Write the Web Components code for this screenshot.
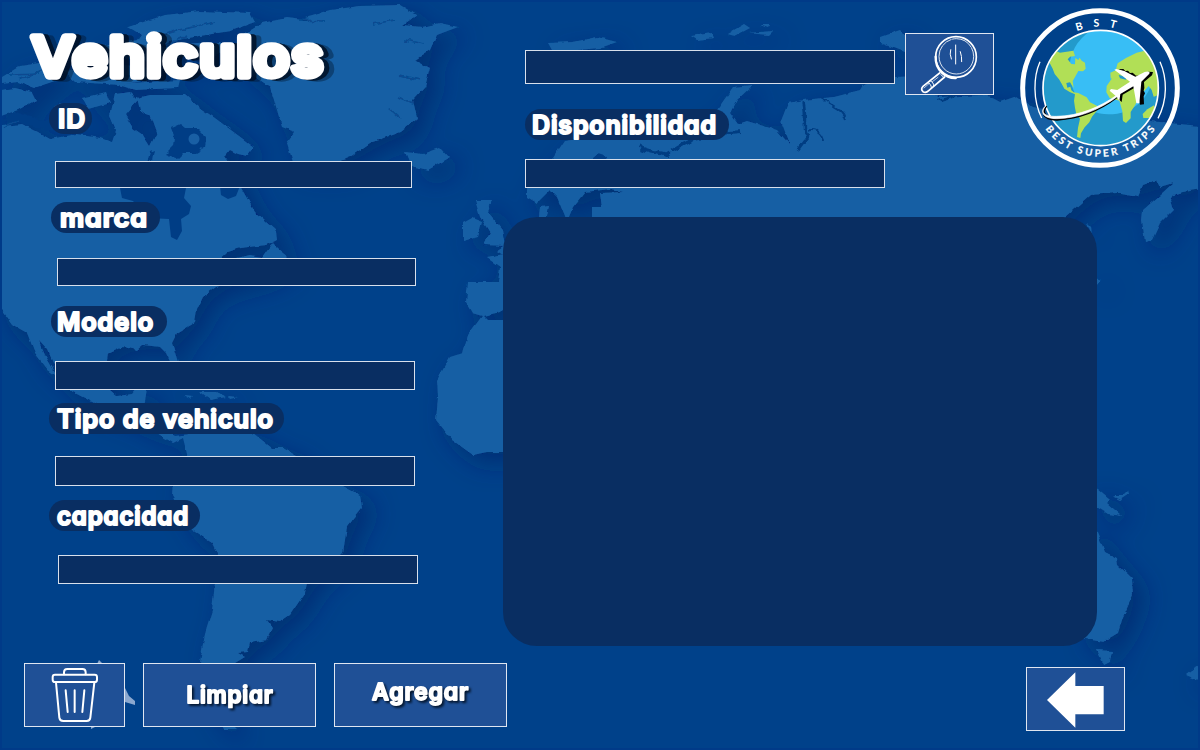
<!DOCTYPE html>
<html lang="es">
<head>
<meta charset="utf-8">
<title>Vehiculos</title>
<style>
html,body{margin:0;height:100%;overflow:hidden;background:#00408a}
</style>
</head>
<body>
<vehicle-screen></vehicle-screen>
<script>
const define = (name, render) => customElements.define(name, class extends HTMLElement {
  connectedCallback() {
    if (this.shadowRoot) return;
    this.attachShadow({ mode: 'open' }).innerHTML = render(k => this.getAttribute(k));
  }
});

/* Rounded heavy lettering: Inter with the single-storey a and round stroke joins */
const FONT = `text{font-family:Inter,"Liberation Sans",sans-serif;font-weight:600;font-feature-settings:"cv11";letter-spacing:.035em;fill:#fff;stroke:#fff;stroke-linejoin:round;stroke-linecap:round}`;

define('world-map', () => `
<style>:host{display:block;position:absolute;inset:0;z-index:-1}svg{display:block}</style>
<svg width="1200" height="750" viewBox="0 0 1200 750">
<defs>
<filter id="coast" x="0" y="0" width="1200" height="750" filterUnits="userSpaceOnUse">
<feTurbulence type="fractalNoise" baseFrequency=".13" numOctaves="2" seed="4" result="n"/>
<feDisplacementMap in="SourceGraphic" in2="n" scale="4" xChannelSelector="R" yChannelSelector="G" result="d"/>
<feDropShadow in="d" dx="11" dy="10" stdDeviation="12" flood-color="#002060" flood-opacity=".5"/>
</filter>
<filter id="rough" x="0" y="0" width="1200" height="750" filterUnits="userSpaceOnUse">
<feTurbulence type="fractalNoise" baseFrequency=".12" numOctaves="2" seed="9" result="n"/>
<feDisplacementMap in="SourceGraphic" in2="n" scale="7" xChannelSelector="R" yChannelSelector="G"/>
</filter>
<clipPath id="c"><rect x="2" y="2" width="1196" height="746"/></clipPath>
</defs>
<rect width="1200" height="750" fill="#003a88"/><rect x="2" y="2" width="1196" height="746" fill="#00418a"/>
<g clip-path="url(#c)"><g fill="#195fa4" filter="url(#coast)">
<path d="M-8 127L22 124 38 132 50 139 76 134 100 138 112 142 116 130 110 116 115 94 130 92 138 100 125 115 133 128 143 135 150 146 157 132 152 118 140 110 137 98 150 95 185 95 200 108 215 118 235 133 254 147 247 156 238 154 230 150 225 156 232 166 240 186 255 212 276 231 277 240 267 245 240 248 227 252 216 262 228 260 250 255 262 257 272 243 278 249 288 257 270 272 216 287 203 297 197 310 195 322 177 333 172 343 178 362 174 370 166 353 160 347 143 345 137 350 123 347 108 354 105 375 110 390 117 396 132 394 136 389 147 388 144 408 165 430 175 436 190 434 206 430 253 433 272 448 283 448 297 456 320 480 343 486 360 495 362 508 347 527 343 553 322 572 307 583 305 593 290 615 280 622 267 620 273 628 267 640 250 643 248 652 238 653 245 657 235 663 226 690 222 715 236 729 224 729 205 700 200 662 205 633 212 610 215 583 217 553 212 543 192 530 172 495 173 480 188 458 183 438 173 443 160 435 130 416 97 404 70 390 60 376 48 350 38 339 45 355 58 377 48 370 35 353 27 333 13 325 2 310 -8 300Z"/>
<path d="M240 37L262 23 287 18 312 21 305 17 330 10 360 6 400 5 417 15 403 25 422 27 440 23 458 27 437 35 430 50 415 60 430 68 425 87 413 100 417 118 400 132 370 143 350 157 333 164 293 162 287 143 295 132 282 127 277 110 270 87 248 72 235 55Z"/>
<path d="M128 27L165 15 200 11 250 13 255 22 230 31 200 36 172 41 150 50 135 45 142 35Z"/>
<path d="M90 50L115 43 145 38 155 48 185 45 220 42 228 50 205 60 180 56 150 62 120 57 98 61Z"/>
<path d="M2 77L20 66 47 62 58 70 55 81 34 88 18 82 2 84Z"/><path d="M62 70L98 72 125 65 150 68 160 78 120 85 75 82Z"/>
<path d="M115 84L180 80 178 88 135 90Z"/><path d="M-5 91L15 88 32 92 36 100 18 110 -5 118Z"/>
<path d="M82 98L106 92 110 103 88 109Z"/><path d="M60 102L70 105 64 110 54 107Z"/>
<path d="M405 152L423 154 440 148 449 158 428 170 411 166Z"/>
<path d="M475 200L492 200 488 212 503 230 506 246 483 245 490 233 480 217Z"/><path d="M463 223L472 218 482 222 478 237 463 241Z"/>
<path d="M540 207L549 206 547 217 539 217Z"/>
<path d="M510 242L497 251 503 255 487 258 500 267 498 282 468 282 466 303 472 313 482 316 468 335 463 353 450 357 437 380 438 397 436 420 452 440 473 455 487 452 520 452 520 320 488 320 484 316 500 312 520 290Z"/>
<path d="M527 197L527 180 553 158 565 140 620 132 690 130 717 110 733 87 753 85 737 100 730 113 738 124 747 121 777 130 790 145 781 121 788 103 803 100 833 97 860 90 863 85 895 77 920 76 937 97 987 95 1000 102 1017 96 1033 107 1060 112 1120 118 1170 123 1208 127 1208 188 1183 192 1173 195 1170 200 1173 210 1160 223 1152 240 1145 242 1142 220 1143 210 1160 195 1173 183 1160 187 1157 180 1143 185 1138 197 1117 193 1090 195 1065 217 1040 250 592 250 592 207 602 207 600 193 623 192 611 189 585 192 573 207 567 222 557 197 550 190 537 203Z"/>
<path d="M880 37L900 30 907 37 905 52 880 43Z"/><path d="M548 43L573 42 597 37 617 42 600 48 577 50 552 50Z"/>
<path d="M691 36L712 33 714 38 697 40ZM727 34L744 24 750 28 735 36ZM748 33L772 31 768 35ZM760 25L770 25 768 28Z"/>
<path d="M1085 528L1097 532 1105 552 1117 558 1118 565 1132 578 1133 595 1123 617 1118 633 1103 642 1080 638Z"/>
<path d="M1097 650L1112 651 1110 662 1104 665Z"/><path d="M1090 486L1097 489 1110 500 1107 503 1122 516 1108 514 1090 503Z"/><path d="M1112 496L1122 496 1128 490 1129 494 1120 500Z"/>
<path d="M1186 675L1200 664 1200 681Z"/><path d="M183 395L193 396 190 399ZM199 392L216 392 226 397 210 400ZM228 396L238 397 230 399Z"/>
<path d="M1087 222L1091 226 1092 236ZM1095 277L1101 280 1096 286Z"/>
</g>
<path fill="#003d85" d="M120 188L186 188 184 198 191 206 189 214 181 219 182 231 177 240 171 237 169 219 148 218 133 201 122 198Z"/><path fill="#003d85" d="M220 186L240 186 236 196 228 199 221 195Z"/>
<g fill="#003d85" filter="url(#rough)"><path d="M171 128L180 124 186 129 198 129 206 137 205 147 195 153 184 153 178 159 166 154 174 146 175 138Z"/><path d="M2 119L20 112 36 119 60 121 66 127 46 131 20 123Z"/><path d="M150 151L155 149 153 160 147 162Z"/><path d="M593 157L598 153 607 156 606 160 594 160Z"/></g>
<circle cx="194" cy="139" r="5.5" fill="#195fa4"/>
<g fill="none" stroke="#003d82" filter="url(#rough)"><path stroke-width="4" d="M638 146C650 155 668 151 668 157M670 152C686 141 694 136 740 132"/><path stroke-width="3.5" d="M803 102C807 120 801 130 808 136L798 150"/><path stroke-width="2" d="M808 131C815 128 822 132 823 141M823 98C829 108 844 109 846 121M938 101L955 96"/></g>
<g fill="none" stroke="#084a90" stroke-width="1.5" filter="url(#rough)"><path d="M145 40L180 30 215 22M165 46L185 36M100 54L130 51 160 54M300 20L325 21M372 24L395 20M10 75L40 74M80 76L140 76M405 40L425 44M400 75L422 80M398 98L412 104M388 108L400 118M18 120L2 127M20 80L45 70"/></g>
<g fill="#8ba8cf"><path d="M125 688L129 696 135 701 135 705 125 702ZM97 664L99 660 103 664ZM91 727L95 727 91 729ZM113 727L115 728Z"/></g></g>
</svg>`);

define('screen-title', a => `
<style>:host{display:block;height:103px}svg{display:block;overflow:visible;filter:drop-shadow(5px 1px 0 rgba(0,14,32,.74)) drop-shadow(5px 1px 0 rgba(0,20,40,.52))}${FONT}text{font-weight:500}</style>
<svg width="503" height="103"><text x="32" y="76" font-size="54" stroke-width="7.4" textLength="293" lengthAdjust="spacingAndGlyphs">${a('text')}</text></svg>`);

define('field-pill', a => `
<style>:host{display:block;width:${a('w')}px;height:31px;border-radius:16px;background:#092e62}svg{display:block;overflow:visible}${FONT}</style>
<svg width="${a('w')}" height="31"><text x="${a('tx')}" y="24.5" font-size="25.5" stroke-width="2.1" textLength="${a('tl')}" lengthAdjust="spacingAndGlyphs">${a('text')}</text></svg>`);

define('text-field', () => `
<style>:host{display:block}input{display:block;box-sizing:border-box;width:100%;height:100%;margin:0;padding:0 8px;border:1px solid #d8e0ec;border-radius:0;background:#092e62;color:#fff;font:16px Inter,sans-serif;outline:0}</style><input type="text">`);

define('action-button', a => `
<style>:host{display:block}button{display:block;box-sizing:border-box;width:100%;height:100%;padding:0;border:1px solid #dfe6f1;background:#1f5096}svg{display:block;margin:-1px;overflow:visible}text{filter:drop-shadow(2px 2px 1px rgba(0,14,32,.85))}${FONT}</style>
<button>${a('text') ? `<svg width="173" height="64"><text x="${a('tx')}" y="${a('ty')}" font-size="22.5" stroke-width="1.8" textLength="${a('tl')}" lengthAdjust="spacingAndGlyphs">${a('text')}</text></svg>` : '<slot></slot>'}</button>`);

define('app-icon', a => {
  const icons = {
    trash: ['72 99 303 192', 101, 64, `<g fill="none" stroke="#fff" stroke-width="6" stroke-linecap="round" stroke-linejoin="round"><rect x="158" y="134" width="133" height="22" rx="7"/><path d="M192 133V127Q192 117 202 117H247Q257 117 257 127V133M168 158L178 263Q179 273 190 273H260Q270 273 271 263L283 158M197 181L203 246M224 181V246M253 181L247 246"/></g>`],
    search: ['315 99 267 186', 89, 62, `<g fill="none" stroke="#fff" stroke-linecap="round"><ellipse cx="468" cy="171" rx="61" ry="61" stroke-width="5"/><path d="M407 170C405 211 438 235 467 234" stroke-width="7"/><ellipse cx="469" cy="169" rx="52" ry="53" stroke-width="2.5" stroke-dasharray="230 4 65 3"/><path d="M467 135V192M452 149Q448 162 454 177M481 155Q486 169 485 185" stroke-width="3"/><path d="M419 219L369 259Q361 267 369 275Q378 280 386 272L434 231" stroke-width="5"/><path d="M423 224L429 230M383 248Q394 251 394 263M390 242Q402 246 401 259" stroke-width="3"/><path d="M372 264L388 250M396 246L414 232" stroke-width="2"/></g>`],
    back: ['49 651 297 192', 99, 64, `<path fill="#fff" d="M112 750L197 667V708H282V793H197V833Z"/>`]
  };
  const [vb, w, h, body] = icons[a('name')];
  return `<style>:host{display:block;margin:-1px}svg{display:block}</style><svg width="${w}" height="${h}" viewBox="${vb}">${body}</svg>`;
});

define('brand-logo', () => `
<style>:host{display:block;width:160px;height:160px}svg{display:block;overflow:visible}text{font-family:Lato,sans-serif;font-weight:700;fill:#fff}</style>
<svg width="160" height="160" viewBox="30 24 480 480">
<defs><clipPath id="g"><circle cx="272" cy="264" r="173"/></clipPath>
<path id="top" d="M87 264A184 184 0 0 1 455 264"/><path id="bottom" d="M65 264A206 206 0 0 0 477 264"/></defs>
<circle cx="270" cy="264" r="232" fill="none" stroke="#fff" stroke-width="15"/>
<g clip-path="url(#g)"><rect x="90" y="80" width="370" height="370" fill="#239acb"/><path fill="#38bef5" d="M262 80Q178 125 178 210C180 285 225 343 295 343C370 343 418 295 430 230L430 80Z"/>
<g fill="#b1df56"><path d="M110 172L140 154 150 158 190 152 195 168 180 170 173 178 184 192 195 193 196 174 205 180 209 173 215 182 225 188 227 206 219 214 205 213 193 235 188 243 191 264 180 247 169 249 172 263 181 260 184 271 191 277 205 279 230 292 240 307 262 318 260 333 246 350 238 367 224 382 213 400 211 414 201 411 204 383 210 356 199 343 195 324 192 302 195 283 179 276 163 266 155 251 147 238 134 222 128 206Z"/>
<path d="M302 236L301 218 317 211 323 190 348 174 380 158 414 150 450 176 460 250 440 287 431 290 425 270 416 258 402 274 382 269 379 287 385 292 376 314 362 336 362 355 348 369 339 363 337 334 328 302 299 294 289 277 290 258 306 235Z"/><path d="M398 342L412 328 432 316 437 350 415 354 400 354Z"/></g></g>
<path fill="#239acb" d="M326 225L350 230 348 239 330 235Z"/>
<circle cx="272" cy="264" r="173" fill="none" stroke="#fff" stroke-width="5"/>
<path d="M90 185C70 230 68 300 95 354M450 185C472 235 473 300 444 355" fill="none" stroke="#fff" stroke-width="4"/>
<path d="M108 317C93 336 103 354 140 352C210 350 270 325 324 287L320 291C270 329 205 356 140 359C91 360 91 330 108 317Z" stroke="#000" stroke-width="4" transform="translate(2 1)"/>
<path d="M108 317C91 335 99 350 140 349C207 348 270 322 324 283L324 288C270 329 204 355 140 356C91 356 91 328 108 317Z" fill="#fff" stroke="#fff" stroke-width="2"/>
<path fill="#000" d="M325 208L340 207 346 213 354 212 360 219 368 218 378 227 392 226 414 215 429 216 426 226 402 246 403 264 401 272 405 280 401 289 402 313 390 314 379 260 338 284 335 306 324 296 330 275 362 248 372 235 345 216Z"/>
<path fill="#fff" d="M313 209L319 207 343 213 376 230 404 216Q422 212 418 221L394 245 388 310 379 310 370 259 331 282 328 303 320 290 299 272 303 267 322 270 360 245Z"/>
<text font-size="32" letter-spacing="20"><textPath href="#top" startOffset="217" textLength="138">BST</textPath></text>
<text font-size="30" stroke="#fff" stroke-width=".6"><textPath href="#bottom" startOffset="132" textLength="382">BEST SUPER TRIPS</textPath></text>
</svg>`);

define('vehicle-screen', () => `
<style>
:host{display:grid;grid-template-columns:503px 1fr;width:1200px;height:750px;position:relative;isolation:isolate;overflow:hidden}
.left,.right{display:flex;flex-direction:column;align-items:flex-start}
.fields{display:flex;flex-direction:column;align-items:flex-start;height:560px}
.bar{display:flex;gap:18px;padding-left:24px;margin-right:-4px}
.bar action-button,.back{height:64px;flex:none}
.head{display:flex;width:100%;height:217px}
.query{width:517px;flex:none}
.search{display:flex;gap:10px;padding:33px 0 0 22px;align-items:flex-start}
.panel{width:594px;height:429px;border-radius:34px;background:#092e62}
</style>
<world-map></world-map>
<section class="left">
<screen-title text="Vehiculos"></screen-title>
<div class="fields">
<field-pill text="ID" w="43" tx="9" tl="28" style="margin-left:49px"></field-pill><text-field style="margin:27px 0 14px 55px;width:357px;height:27px"></text-field>
<field-pill text="marca" w="109" tx="9" tl="88" style="margin-left:51px"></field-pill><text-field style="margin:25px 0 20px 57px;width:359px;height:28px"></text-field>
<field-pill text="Modelo" w="116" tx="6" tl="97" style="margin-left:51px"></field-pill><text-field style="margin:24px 0 13px 55px;width:360px;height:29px"></text-field>
<field-pill text="Tipo de vehiculo" w="235" tx="8" tl="217" style="margin-left:49px"></field-pill><text-field style="margin:22px 0 14px 55px;width:360px;height:30px"></text-field>
<field-pill text="capacidad" w="151" tx="8" tl="132" style="margin-left:49px"></field-pill><text-field style="margin:24px 0 0 58px;width:360px;height:29px"></text-field>
</div>
<div class="bar">
<action-button style="width:101px"><app-icon name="trash"></app-icon></action-button>
<action-button text="Limpiar" tx="43.5" ty="40" tl="87" style="width:173px"></action-button>
<action-button text="Agregar" tx="38" ty="36.5" tl="97" style="width:173px"></action-button>
</div>
</section>
<section class="right">
<div class="head">
<div class="query">
<div class="search"><text-field style="width:370px;height:34px;margin-top:17px"></text-field><action-button style="width:89px;height:62px"><app-icon name="search"></app-icon></action-button></div>
<field-pill text="Disponibilidad" w="204" tx="7" tl="185" style="margin:14px 0 0 22px"></field-pill>
<text-field style="margin:19px 0 0 22px;width:360px;height:29px"></text-field>
</div>
<brand-logo style="margin-top:8px"></brand-logo>
</div>
<div class="panel"></div>
<action-button class="back" style="width:99px;margin:21px 0 0 523px"><app-icon name="back"></app-icon></action-button>
</section>`);
</script>
</body>
</html>
